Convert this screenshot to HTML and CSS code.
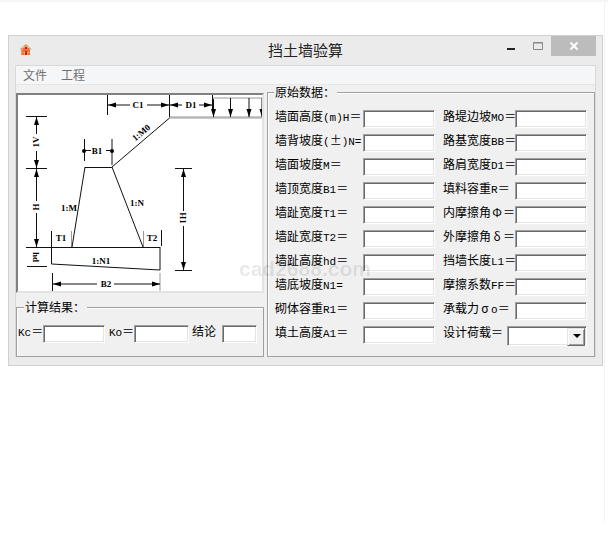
FILE: index.html
```html
<!DOCTYPE html>
<html lang="zh-CN">
<head>
<meta charset="utf-8">
<title>挡土墙验算</title>
<link rel="stylesheet" href="styles.css">
</head>
<body>
<main class="page">
<section class="window">
  <header class="titlebar">
    <svg class="app-icon" viewBox="0 0 12 12" aria-hidden="true">
      <path d="M6 0 L11 5 L10 6 V11 H1 V6 L0 5 Z" fill="#f0985a"/>
      <path d="M6 0.5 L11 5.5 M6 0.5 L1 5.5" stroke="#a9b59c" fill="none"/>
      <path d="M3 5 H9 M2 7 H10" stroke="#e5482a" fill="none"/>
      <path d="M2 9 H4 V11 H2 Z M8 9 H10 V11 H8 Z" fill="#fb6a35"/>
      <path d="M5 3 H7 V5 H5 Z M5 7 H7 V11 H5 Z" fill="#d5200f"/>
      <path d="M3 3 H4 V4 H3 Z M8 3 H9 V4 H8 Z M4 8 H5 V9 H4 Z" fill="#ffd76a"/>
    </svg>
    <h1 class="title">挡土墙验算</h1>
    <div class="controls">
      <button class="control" type="button" aria-label="最小化"><svg width="10" height="10" viewBox="0 0 10 10"><path d="M1 7H9V9H1Z" fill="#222"/></svg></button>
      <button class="control" type="button" aria-label="最大化"><svg width="10" height="10" viewBox="0 0 10 10"><path d="M0.5 1.5H9.5V8.5H0.5Z M0 2H10" fill="none" stroke="#8a8a8a"/></svg></button>
      <button class="control close" type="button" aria-label="关闭"><svg width="10" height="10" viewBox="0 0 10 10"><path d="M1.5 1.5L8.5 8.5M8.5 1.5L1.5 8.5" fill="none" stroke="#fff" stroke-width="2"/></svg></button>
    </div>
  </header>
  <div class="client">
    <nav class="menu">
      <button type="button">文件</button>
      <button type="button">工程</button>
    </nav>
    <div class="panes">
      <div class="left">
        <div class="figure">
          <svg class="diagram" viewBox="18 95 244 196" role="img" aria-label="挡土墙断面">
            <defs>
              <marker id="arrow" viewBox="0 0 8 6" refX="8" refY="3" markerWidth="8" markerHeight="6" markerUnits="userSpaceOnUse" orient="auto-start-reverse"><path d="M0 0.5L8 3L0 5.5Z" fill="#000"/></marker>
            </defs>
            <g class="soft">
              <path d="M169 117H262M169 118H262M71.5 231V247M160 273V291M143.5 231V247M213 98H262"/>
            </g>
            <g class="lines">
              <path d="M107.5 95V115M169.5 95V117M212.5 95V112"/>
              <path d="M169.5 118L112 167M26 116.5H47M26 168.5H47M26 247.5H160M27 266.5H47"/>
              <path d="M84.5 139V161M112 139V165M85 167.5H112M85 167L72 247M112 167L143 247"/>
              <path d="M51.5 231V264L160 270M160 247V270M161.5 230V246M52.5 273V291"/>
              <path d="M175 168.5H192M175 270.5H192M84 150.5H91M106 150.5H112"/>
            </g>
            <g class="lines">
              <path marker-end="url(#arrow)" d="M130 105H108"/>
              <path marker-end="url(#arrow)" d="M147 105H169"/>
              <path marker-end="url(#arrow)" d="M182 105H170"/>
              <path marker-end="url(#arrow)" d="M199 105H212"/>
              <path marker-end="url(#arrow)" d="M213.5 99V117"/>
              <path marker-end="url(#arrow)" d="M230.5 98V117"/>
              <path marker-end="url(#arrow)" d="M249 98V117"/>
              <path marker-end="url(#arrow)" d="M262 98V117"/>
              <path marker-end="url(#arrow)" d="M36.5 134V117"/>
              <path marker-end="url(#arrow)" d="M36.5 151V168"/>
              <path marker-end="url(#arrow)" d="M36.5 201V169"/>
              <path marker-end="url(#arrow)" d="M36.5 213V247"/>
              <path marker-end="url(#arrow)" d="M183.5 211V169"/>
              <path marker-end="url(#arrow)" d="M183.5 226V270"/>
              <path marker-end="url(#arrow)" d="M97 284H53"/>
              <path marker-end="url(#arrow)" d="M114 284H160"/>
            </g>
            <circle cx="84" cy="151" r="2"/>
            <circle cx="112" cy="151" r="2"/>
            <g class="marks">
              <text x="138" y="108">C1</text>
              <text x="191" y="108">D1</text>
              <text x="97" y="154">B1</text>
              <text x="69" y="211">1:M</text>
              <text x="137" y="206">1:N</text>
              <text x="61" y="241">T1</text>
              <text x="152" y="241">T2</text>
              <text x="101" y="264">1:N1</text>
              <text x="106" y="287">B2</text>
              <text transform="translate(143 135) rotate(-40)">1:M0</text>
              <text transform="translate(39 142) rotate(-90)">1V</text>
              <text transform="translate(33 207) rotate(90)">H</text>
              <text transform="translate(33 257) rotate(90)">hd</text>
              <text transform="translate(180 218) rotate(90)">H1</text>
            </g>
          </svg>
        </div>
        <fieldset class="group results">
          <legend>计算结果：</legend>
          <div class="result-row">
            <label for="kc"><span class="latin">Kc</span>＝</label><input class="box long" id="kc" type="text">
            <label for="ko"><span class="latin">Ko</span>＝</label><input class="box medium" id="ko" type="text">
            <label class="verdict" for="verdict">结论</label><input class="box short" id="verdict" type="text">
          </div>
        </fieldset>
      </div>
      <fieldset class="group data">
        <legend>原始数据：</legend>
        <div class="columns">
          <div class="column first">
            <div class="field"><label for="h">墙面高度<span class="latin">(m)H</span>＝</label><input class="box" id="h" type="text"></div>
            <div class="field"><label for="n">墙背坡度<span class="latin">(</span><span class="full">±</span><span class="latin">)N=</span></label><input class="box" id="n" type="text"></div>
            <div class="field"><label for="m">墙面坡度<span class="latin">M</span>＝</label><input class="box" id="m" type="text"></div>
            <div class="field"><label for="b1">墙顶宽度<span class="latin">B1</span>＝</label><input class="box" id="b1" type="text"></div>
            <div class="field"><label for="t1">墙趾宽度<span class="latin">T1</span>＝</label><input class="box" id="t1" type="text"></div>
            <div class="field"><label for="t2">墙趾宽度<span class="latin">T2</span>＝</label><input class="box" id="t2" type="text"></div>
            <div class="field"><label for="hd">墙趾高度<span class="latin">hd</span>＝</label><input class="box" id="hd" type="text"></div>
            <div class="field"><label for="n1">墙底坡度<span class="latin">N1=</span></label><input class="box" id="n1" type="text"></div>
            <div class="field"><label for="r1">砌体容重<span class="latin">R1</span>＝</label><input class="box" id="r1" type="text"></div>
            <div class="field"><label for="a1">填土高度<span class="latin">A1</span>＝</label><input class="box" id="a1" type="text"></div>
          </div>
          <div class="column second">
            <div class="field"><label for="m0">路堤边坡<span class="latin">MO</span>＝</label><input class="box" id="m0" type="text"></div>
            <div class="field"><label for="bb">路基宽度<span class="latin">BB</span>＝</label><input class="box" id="bb" type="text"></div>
            <div class="field"><label for="d1">路肩宽度<span class="latin">D1</span>＝</label><input class="box" id="d1" type="text"></div>
            <div class="field"><label for="r">填料容重<span class="latin">R</span>＝</label><input class="box" id="r" type="text"></div>
            <div class="field"><label for="phi">内摩擦角<span class="full">Φ</span>＝</label><input class="box" id="phi" type="text"></div>
            <div class="field"><label for="delta">外摩擦角<span class="full">δ</span>＝</label><input class="box" id="delta" type="text"></div>
            <div class="field"><label for="l1">挡墙长度<span class="latin">L1</span>＝</label><input class="box" id="l1" type="text"></div>
            <div class="field"><label for="ff">摩擦系数<span class="latin">FF</span>＝</label><input class="box" id="ff" type="text"></div>
            <div class="field"><label for="sigma">承载力<span class="full">σ</span><span class="latin">o</span>＝</label><input class="box" id="sigma" type="text"></div>
            <div class="field load"><label for="load">设计荷载＝</label><span class="picker"><select class="box" id="load"><option></option></select></span></div>
          </div>
        </div>
      </fieldset>
      <div class="watermark">cad2688.com</div>
    </div>
  </div>
</section>
</main>
</body>
</html>
```
FILE: styles.css
```css
* { box-sizing: border-box; }

body {
  margin: 0;
  background: #fff;
  border-top: 2px solid #f5f5f5;
  color: #000;
  font: 12px/14px "Noto Sans CJK SC", sans-serif;
}

.page {
  margin-right: 3px;
  padding: 33px 1px 0 8px;
  min-height: 520px;
  border-right: 1px solid #f3f3f3;
}

.window {
  padding: 0 6px 8px;
  background: #ebebeb;
  border: 1px solid #d0d0d0;
}

.titlebar {
  display: grid;
  grid-template-columns: 1fr auto 1fr;
  height: 29px;
}

.app-icon {
  width: 12px;
  height: 12px;
  margin: 8px 0 0 5px;
}

.title {
  margin: 4px 0 0;
  color: #222;
  font-size: 15px;
  font-weight: 400;
  line-height: 20px;
}

.controls {
  display: flex;
  justify-content: flex-end;
}

.control {
  display: flex;
  align-items: center;
  justify-content: center;
  width: 27px;
  height: 20px;
  padding: 0;
  background: none;
  border: 0;
}

.control.close {
  width: 45px;
  background: #bcbcbc;
}

.client {
  background: #f0f0f0;
  border: 1px solid #d9d9d9;
  border-width: 1px 1px 0;
}

.menu {
  display: flex;
  gap: 14px;
  height: 19px;
  padding-left: 7px;
  background: #f5f6f8;
  border-bottom: 1px solid #e6e6e6;
}

.menu button {
  padding: 0;
  background: none;
  border: 0;
  color: #707070;
  font: inherit;
}

.panes {
  position: relative;
  display: grid;
  grid-template-columns: 248fr 328fr;
  gap: 3px;
}

.left {
  display: flex;
  flex-direction: column;
  justify-content: space-between;
  padding-top: 8px;
}

.figure {
  background: #fff;
  border: 2px solid;
  border-color: #808080 #e3e3e3 #e3e3e3 #808080;
}

.diagram {
  display: block;
  width: 100%;
}

.lines { fill: none; stroke: #111; stroke-width: 1; }
.soft { fill: none; stroke: #999; stroke-width: 1; }

.marks {
  font: bold 9px "Liberation Serif", serif;
  text-anchor: middle;
}

.group {
  min-width: 0;
  margin: 0;
  padding: 0 7px;
  border: 1px solid #a0a0a0;
  box-shadow: inset 1px 1px #fff;
}

.group legend {
  height: 14px;
  padding: 0 2px 0 1px;
  background: #f0f0f0;
}

.data { padding-bottom: 12px; }
.data legend { margin-left: -1px; }

.columns {
  display: grid;
  grid-template-columns: 160fr 144fr;
  gap: 8px;
  padding-top: 11px;
}

.column {
  display: flex;
  flex-direction: column;
  gap: 6px;
  min-width: 0;
}

.field {
  display: flex;
  height: 18px;
}

.field label {
  flex: none;
  width: 88px;
  line-height: 12px;
  white-space: nowrap;
}

.second .field label { width: 72px; }
.second .load label { width: 64px; }

.latin { font: 11px/12px "Liberation Mono", monospace; }

.full {
  display: inline-block;
  width: 12px;
  text-align: center;
}

.box {
  flex: 1;
  width: 100%;
  min-width: 0;
  height: 18px;
  padding: 0 3px;
  background: #fff;
  border: 1px solid;
  border-color: #a0a0a0 #fff #fff #a0a0a0;
  border-radius: 0;
  box-shadow: inset 1px 1px #696969, inset -1px -1px #e3e3e3;
  font: inherit;
}

.picker {
  position: relative;
  flex: 1;
}

.picker .box {
  display: block;
  height: 20px;
  appearance: none;
}

.picker::before {
  content: "";
  position: absolute;
  top: 2px;
  right: 2px;
  width: 16px;
  height: 16px;
  background: #f0f0f0;
  border: 1px solid;
  border-color: #e3e3e3 #696969 #696969 #e3e3e3;
  box-shadow: inset 1px 1px #fff, inset -1px -1px #a0a0a0;
  pointer-events: none;
}

.picker::after {
  content: "";
  position: absolute;
  top: 8px;
  right: 6px;
  border: 4px solid transparent;
  border-top-color: #000;
  border-bottom: 0;
  pointer-events: none;
}

.results { padding: 0 6px 13px 1px; }
.results legend { margin-left: 6px; }

.result-row {
  display: flex;
  padding-top: 11px;
}

.result-row label {
  flex: none;
  width: 25px;
  line-height: 12px;
  white-space: nowrap;
}

.result-row .long { flex: 64; margin-right: 4px; }
.result-row .medium { flex: 56; margin-right: 3px; }
.result-row .short { flex: 32; }
.result-row .verdict { width: 30px; }

.watermark {
  position: absolute;
  top: 173px;
  left: 223px;
  color: rgba(0, 0, 0, 0.09);
  font: bold 21px/22px "Liberation Sans", sans-serif;
  pointer-events: none;
}
```
